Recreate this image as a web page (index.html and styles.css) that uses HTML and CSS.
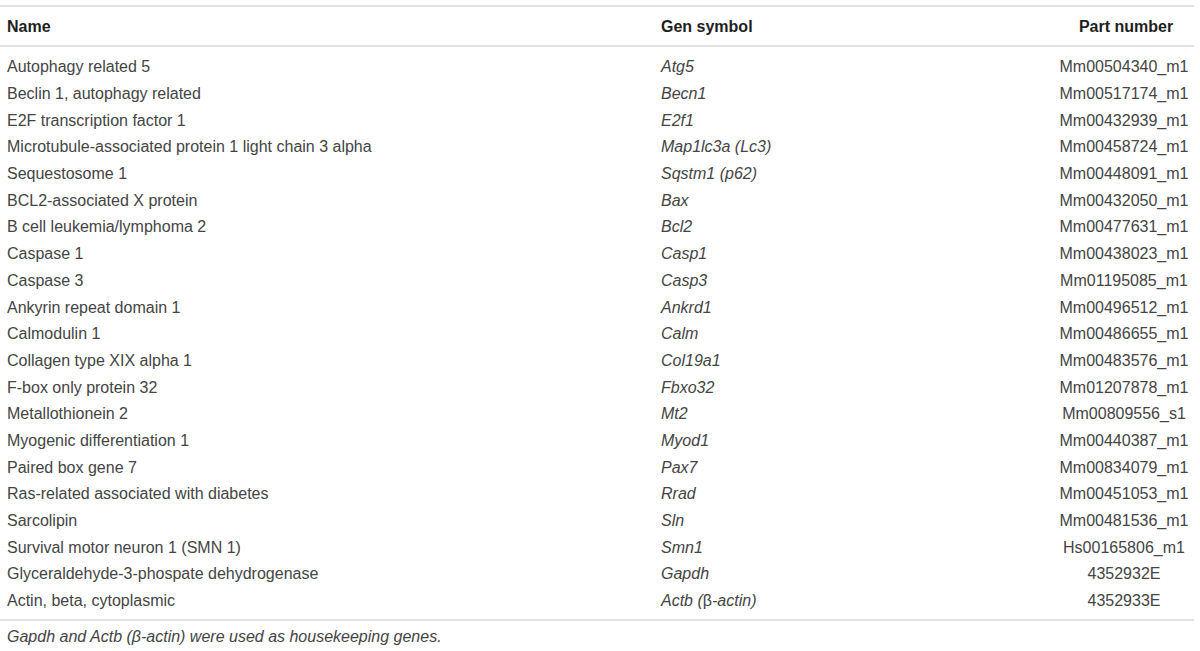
FILE: index.html
```html
<!DOCTYPE html>
<html>
<head>
<meta charset="utf-8">
<link rel="stylesheet" href="styles.css">
</head>
<body>
<div class="wrap">
<table class="genes">
<thead>
<tr><th class="c-name">Name</th><th class="c-sym">Gen symbol</th><th class="c-part">Part number</th></tr>
</thead>
<tbody>
<tr class="first"><td>Autophagy related 5</td><td class="sym">Atg5</td><td class="part">Mm00504340_m1</td></tr>
<tr><td>Beclin 1, autophagy related</td><td class="sym">Becn1</td><td class="part">Mm00517174_m1</td></tr>
<tr><td>E2F transcription factor 1</td><td class="sym">E2f1</td><td class="part">Mm00432939_m1</td></tr>
<tr><td>Microtubule-associated protein 1 light chain 3 alpha</td><td class="sym">Map1lc3a (Lc3)</td><td class="part">Mm00458724_m1</td></tr>
<tr><td>Sequestosome 1</td><td class="sym">Sqstm1 (p62)</td><td class="part">Mm00448091_m1</td></tr>
<tr><td>BCL2-associated X protein</td><td class="sym">Bax</td><td class="part">Mm00432050_m1</td></tr>
<tr><td>B cell leukemia/lymphoma 2</td><td class="sym">Bcl2</td><td class="part">Mm00477631_m1</td></tr>
<tr><td>Caspase 1</td><td class="sym">Casp1</td><td class="part">Mm00438023_m1</td></tr>
<tr><td>Caspase 3</td><td class="sym">Casp3</td><td class="part">Mm01195085_m1</td></tr>
<tr><td>Ankyrin repeat domain 1</td><td class="sym">Ankrd1</td><td class="part">Mm00496512_m1</td></tr>
<tr><td>Calmodulin 1</td><td class="sym">Calm</td><td class="part">Mm00486655_m1</td></tr>
<tr><td>Collagen type XIX alpha 1</td><td class="sym">Col19a1</td><td class="part">Mm00483576_m1</td></tr>
<tr><td>F-box only protein 32</td><td class="sym">Fbxo32</td><td class="part">Mm01207878_m1</td></tr>
<tr><td>Metallothionein 2</td><td class="sym">Mt2</td><td class="part">Mm00809556_s1</td></tr>
<tr><td>Myogenic differentiation 1</td><td class="sym">Myod1</td><td class="part">Mm00440387_m1</td></tr>
<tr><td>Paired box gene 7</td><td class="sym">Pax7</td><td class="part">Mm00834079_m1</td></tr>
<tr><td>Ras-related associated with diabetes</td><td class="sym">Rrad</td><td class="part">Mm00451053_m1</td></tr>
<tr><td>Sarcolipin</td><td class="sym">Sln</td><td class="part">Mm00481536_m1</td></tr>
<tr><td>Survival motor neuron 1 (SMN 1)</td><td class="sym">Smn1</td><td class="part">Hs00165806_m1</td></tr>
<tr><td>Glyceraldehyde-3-phospate dehydrogenase</td><td class="sym">Gapdh</td><td class="part">4352932E</td></tr>
<tr class="last"><td>Actin, beta, cytoplasmic</td><td class="sym">Actb (<span class="up">β</span>-actin)</td><td class="part">4352933E</td></tr>
</tbody>
</table>
<p class="note">Gapdh and Actb (β-actin) were used as housekeeping genes.</p>
</div>
</body>
</html>
```

FILE: styles.css
```css
html, body {
  margin: 0;
  padding: 0;
  background: #ffffff;
}
body {
  font-family: "Liberation Sans", Arial, sans-serif;
  font-size: 16px;
  color: #444444;
}
.wrap {
  width: 1194px;
  padding-top: 5px;
}
.genes {
  width: 1194px;
  border-collapse: collapse;
  table-layout: fixed;
  border-top: 2px solid #e2e2e2;
  border-bottom: 2px solid #e2e2e2;
}
.genes th {
  font-weight: bold;
  color: #1e1e1e;
  text-align: left;
  height: 36px;
  padding: 2px 0 0 7px;
  border-bottom: 2px solid #e2e2e2;
  vertical-align: middle;
}
.genes .c-name {
  width: 647px;
}
.genes .c-part {
  width: 136px;
}
.genes th.c-part {
  text-align: center;
  padding: 2px 0 0 3px;
}
.genes td {
  height: 26.7px;
  padding: 0 0 0 7px;
  vertical-align: middle;
  white-space: nowrap;
}
.genes tr.first td {
  padding-top: 7px;
}
.genes tr.last td {
  padding-bottom: 5px;
}
.genes td.sym {
  font-style: italic;
}
.genes td.part {
  text-align: center;
  padding-left: 0;
  padding-right: 1px;
}
.up {
  font-style: normal;
}
.note {
  margin: 0;
  padding: 7px 0 0 7px;
  line-height: 18px;
  font-style: italic;
}
```
